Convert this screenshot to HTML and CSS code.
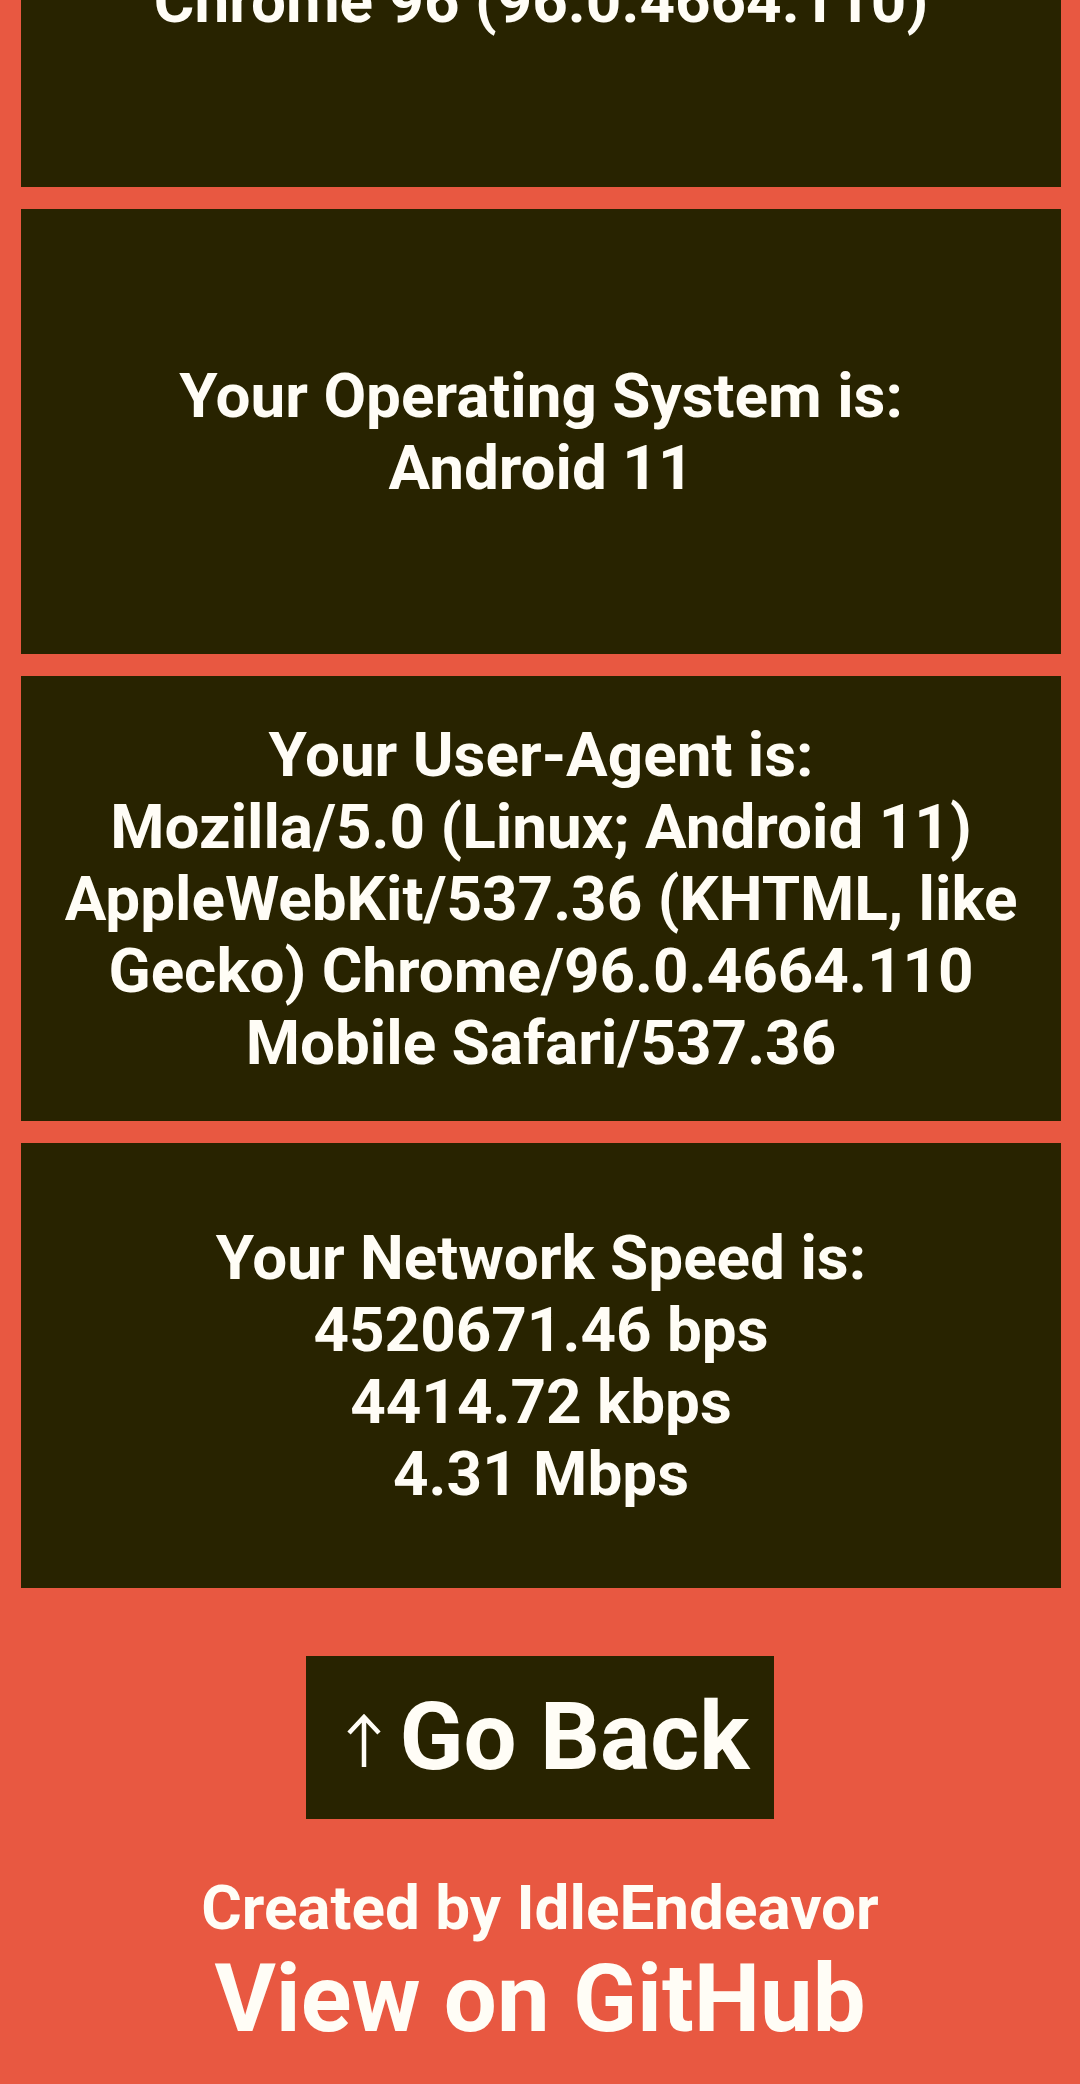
FILE: index.html
```html
<!DOCTYPE html>
<html lang="en">
<head>
<meta charset="utf-8">
<title>What's My Browser</title>
<link rel="stylesheet" href="styles.css">
</head>
<body>
<main class="cards">
  <section class="card card-first">
    <p>Your Browser is:<br>Chrome 96 (96.0.4664.110)</p>
  </section>
  <section class="card">
    <p>Your Operating System is:<br>Android 11</p>
  </section>
  <section class="card">
    <p>Your User-Agent is:<br>Mozilla/5.0 (Linux; Android 11) AppleWebKit/537.36 (KHTML, like Gecko) Chrome/96.0.4664.110 Mobile Safari/537.36</p>
  </section>
  <section class="card">
    <p>Your Network Speed is:<br>4520671.46 bps<br>4414.72 kbps<br>4.31 Mbps</p>
  </section>
</main>
<div class="back-wrap">
  <a class="back" href="#top"><svg class="arrow" width="36" height="54" viewBox="0 0 36 54" aria-hidden="true"><path d="M18 53V3M3 19L18 3L33 19" fill="none" stroke="#fffdf6" stroke-width="4.5" stroke-linejoin="miter"/></svg><span>Go Back</span></a>
</div>
<footer class="footer">
  <p class="credit">Created by IdleEndeavor</p>
  <a class="github" href="#">View on GitHub</a>
</footer>
</body>
</html>
```

FILE: styles.css
```css
html, body {
  margin: 0;
  padding: 0;
}
body {
  background: #e85841;
  color: #fffdf6;
  font-family: Roboto, "Liberation Sans", sans-serif;
  font-weight: 700;
  text-align: center;
  overflow: hidden;
}
.cards {
  display: flex;
  flex-direction: column;
  gap: 22px;
  padding: 0 19px 0 21px;
}
.card {
  height: 445px;
  background: #282300;
  display: flex;
  align-items: center;
  justify-content: center;
  padding: 0 20px;
  box-sizing: border-box;
}
.card-first {
  margin-top: -258px;
}
.card p {
  margin: 0;
  font-size: 62px;
  line-height: 72px;
}
.back-wrap {
  display: flex;
  justify-content: center;
  margin-top: 68px;
}
.back {
  display: inline-flex;
  align-items: center;
  height: 163px;
  box-sizing: border-box;
  padding: 0 25px 0 40px;
  background: #282300;
  color: #fffdf6;
  text-decoration: none;
  font-size: 94px;
  line-height: 1;
}
.arrow {
  display: block;
  margin-right: 18px;
  margin-top: 6px;
}
.back span {
  display: block;
  padding-bottom: 2px;
}
.footer {
  margin-top: 54px;
}
.credit {
  margin: 0;
  font-size: 62px;
  line-height: 70px;
}
.github {
  display: block;
  color: #fffdf6;
  text-decoration: none;
  font-size: 94px;
  line-height: 112px;
}
```
